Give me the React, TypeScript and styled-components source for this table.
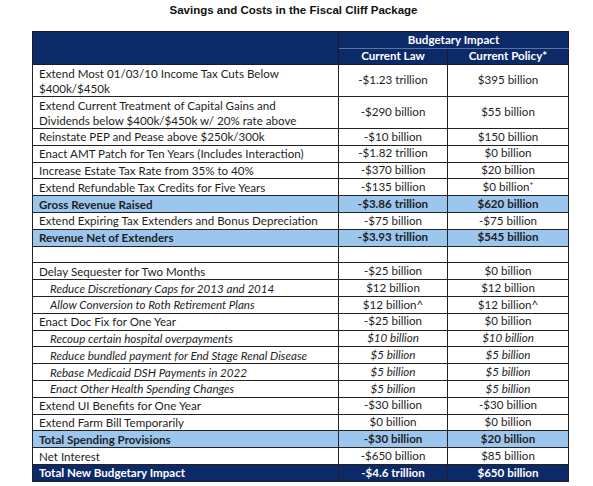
import React from "react";
import styled, { createGlobalStyle } from "styled-components";

const Global = createGlobalStyle`
  html, body { margin: 0; padding: 0; background: #ffffff; }
`;

const Page = styled.div`
  width: 593px;
  padding-top: 3px;
  display: flex;
  flex-direction: column;
  align-items: center;
`;

const Title = styled.h1`
  margin: 0 0 0 -6px;
  font-family: "Liberation Sans", Arial, sans-serif;
  font-weight: bold;
  font-size: 11.5px;
  line-height: 14px;
  color: #111;
`;

const TableWrap = styled.div`
  margin-top: 14px;
  width: 100%;
  padding-left: 32px;
  box-sizing: border-box;
`;

const Table = styled.table`
  border-collapse: collapse;
  width: 536px;
  table-layout: fixed;
  font-family: Lato, "Open Sans", sans-serif;
  font-size: 11.6px;
  color: #1e1e1e;
`;

const HeadCell = styled.th<{ $top?: boolean }>`
  background: #0c2a68;
  color: #ffffff;
  font-weight: bold;
  height: 15.5px;
  padding: 0;
  line-height: 14px;
  text-align: center;
  border: 1px solid #1a1a2a;
  border-bottom-color: ${(p) => (p.$top ? "#5a74a8" : "#1a1a2a")};
`;

type Kind = "normal" | "total" | "grand";

const Row = styled.tr<{ $kind: Kind; $tall?: boolean }>`
  background: ${(p) =>
    p.$kind === "total" ? "#9cc6ee" : p.$kind === "grand" ? "#0c2a68" : "#ffffff"};
  color: ${(p) => (p.$kind === "grand" ? "#ffffff" : "#1e1e1e")};
  font-weight: ${(p) => (p.$kind === "total" || p.$kind === "grand" ? "bold" : "normal")};
  height: ${(p) => (p.$tall ? "32px" : "16.8px")};
`;

const LabelCell = styled.td<{ $italic?: boolean }>`
  padding: 0 0 0 ${(p) => (p.$italic ? "17px" : "6px")};
  line-height: 15px;
  text-align: left;
  font-style: ${(p) => (p.$italic ? "italic" : "normal")};
  border: 1px solid #222;
  white-space: nowrap;
  overflow: hidden;
`;

const ValueCell = styled.td<{ $italic?: boolean }>`
  padding: 0;
  line-height: 14.5px;
  text-align: center;
  font-style: ${(p) => (p.$italic ? "italic" : "normal")};
  border: 1px solid #222;
  white-space: nowrap;
`;

type Item = {
  label: React.ReactNode;
  law: string;
  policy: string;
  kind?: Kind;
  tall?: boolean;
  italicLabel?: boolean;
  italicValues?: boolean;
};

const items: Item[] = [
  { label: <>Extend Most 01/03/10 Income Tax Cuts Below<br />$400k/$450k</>, law: "-$1.23 trillion", policy: "$395 billion", tall: true },
  { label: <>Extend Current Treatment of Capital Gains and<br />Dividends below $400k/$450k w/ 20% rate above</>, law: "-$290 billion", policy: "$55 billion", tall: true },
  { label: "Reinstate PEP and Pease above $250k/300k", law: "-$10 billion", policy: "$150 billion" },
  { label: "Enact AMT Patch for Ten Years (Includes Interaction)", law: "-$1.82 trillion", policy: "$0 billion" },
  { label: "Increase Estate Tax Rate from 35% to 40%", law: "-$370 billion", policy: "$20 billion" },
  { label: "Extend Refundable Tax Credits for Five Years", law: "-$135 billion", policy: "$0 billion⁺" },
  { label: "Gross Revenue Raised", law: "-$3.86 trillion", policy: "$620 billion", kind: "total" },
  { label: "Extend Expiring Tax Extenders and Bonus Depreciation", law: "-$75 billion", policy: "-$75 billion" },
  { label: "Revenue Net of Extenders", law: "-$3.93 trillion", policy: "$545 billion", kind: "total" },
  { label: "", law: "", policy: "" },
  { label: "Delay Sequester for Two Months", law: "-$25 billion", policy: "$0 billion" },
  { label: "Reduce Discretionary  Caps for 2013 and 2014", law: "$12 billion", policy: "$12 billion", italicLabel: true },
  { label: "Allow Conversion to Roth Retirement  Plans", law: "$12 billion^", policy: "$12 billion^", italicLabel: true },
  { label: "Enact Doc Fix for One Year", law: "-$25 billion", policy: "$0 billion" },
  { label: "Recoup certain hospital overpayments", law: "$10 billion", policy: "$10 billion", italicLabel: true, italicValues: true },
  { label: "Reduce bundled payment for End Stage Renal Disease", law: "$5 billion", policy: "$5 billion", italicLabel: true, italicValues: true },
  { label: "Rebase Medicaid DSH Payments in 2022", law: "$5 billion", policy: "$5 billion", italicLabel: true, italicValues: true },
  { label: "Enact Other Health Spending Changes", law: "$5 billion", policy: "$5 billion", italicLabel: true, italicValues: true },
  { label: "Extend UI Benefits for One Year", law: "-$30 billion", policy: "-$30 billion" },
  { label: "Extend Farm Bill Temporarily", law: "$0 billion", policy: "$0 billion" },
  { label: "Total Spending Provisions", law: "-$30 billion", policy: "$20 billion", kind: "total" },
  { label: "Net Interest", law: "-$650 billion", policy: "$85 billion" },
  { label: "Total New Budgetary Impact", law: "-$4.6 trillion", policy: "$650 billion", kind: "grand" },
];

export default function App() {
  return (
    <>
      <Global />
      <Page>
        <Title>Savings and Costs in the Fiscal Cliff Package</Title>
        <TableWrap>
          <Table>
            <colgroup>
              <col style={{ width: 306 }} />
              <col style={{ width: 109 }} />
              <col style={{ width: 121 }} />
            </colgroup>
            <thead>
              <tr>
                <HeadCell rowSpan={2} />
                <HeadCell colSpan={2} $top>Budgetary Impact</HeadCell>
              </tr>
              <tr>
                <HeadCell>Current Law</HeadCell>
                <HeadCell>Current Policy*</HeadCell>
              </tr>
            </thead>
            <tbody>
              {items.map((it, i) => (
                <Row key={i} $kind={it.kind ?? "normal"} $tall={it.tall}>
                  <LabelCell $italic={it.italicLabel}>{it.label}</LabelCell>
                  <ValueCell $italic={it.italicValues}>{it.law}</ValueCell>
                  <ValueCell $italic={it.italicValues}>{it.policy}</ValueCell>
                </Row>
              ))}
            </tbody>
          </Table>
        </TableWrap>
      </Page>
    </>
  );
}
